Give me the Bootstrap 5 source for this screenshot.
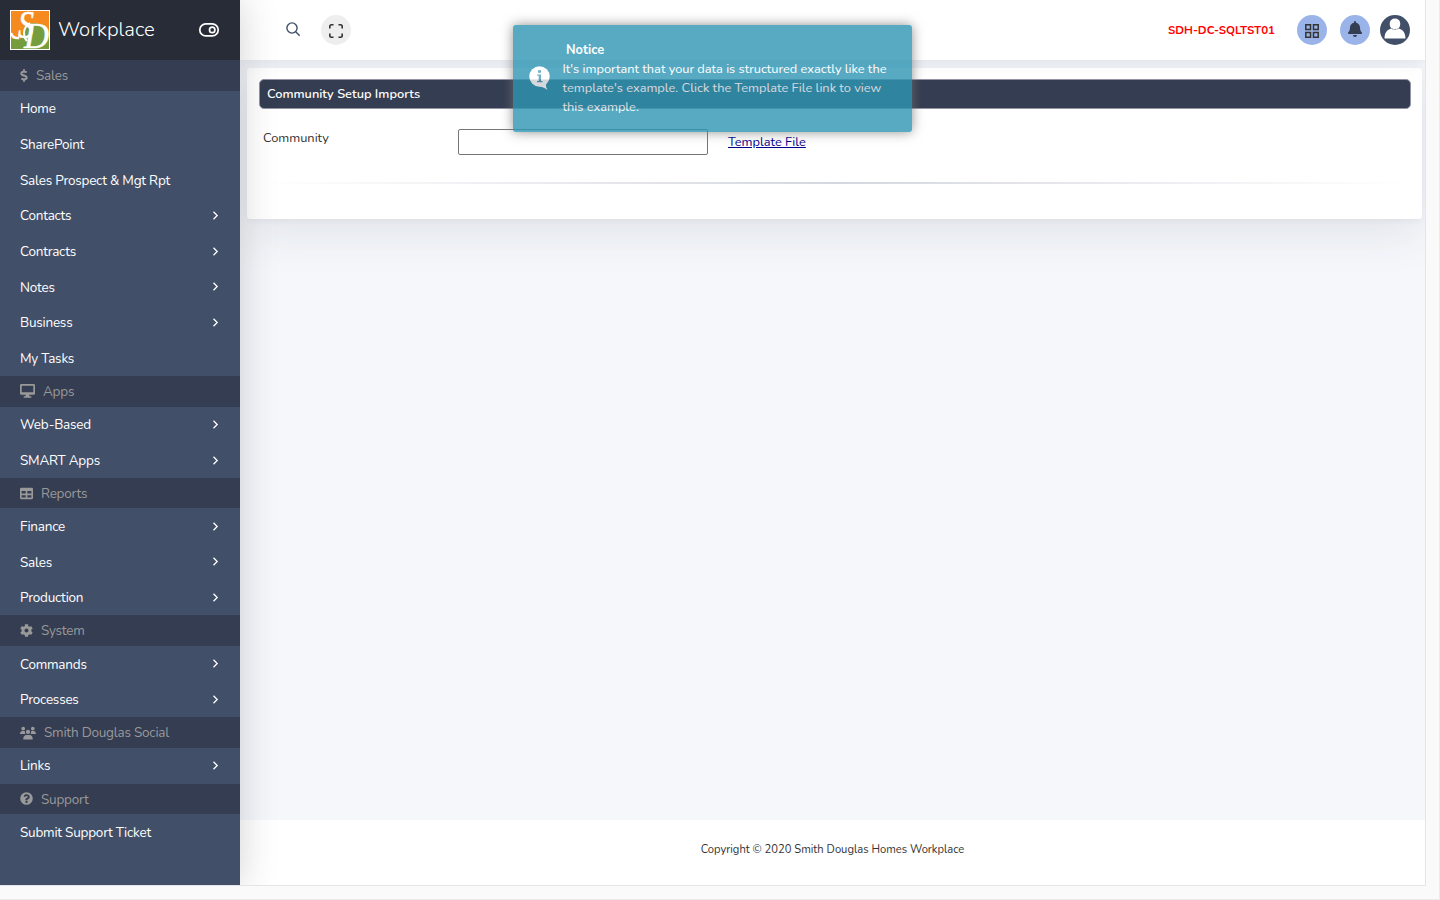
<!DOCTYPE html>
<html lang="en">
<head>
<meta charset="utf-8">
<meta name="viewport" content="width=device-width, initial-scale=1">
<title>Workplace</title>
<link href="https://cdn.jsdelivr.net/npm/bootstrap@5.3.0/dist/css/bootstrap.min.css" rel="stylesheet">
<style>
body{font-family:Nunito,Lato,"Open Sans",sans-serif;font-size:12.8px;line-height:19px;color:#333;background:#fafafa;height:900px;overflow:hidden;border-right:1px solid #ebebeb;border-bottom:1px solid #ebebeb}
.shell{width:1426px;height:886px;border-right:1px solid #e5e5e5;border-bottom:1px solid #e5e5e5;overflow:hidden}
.side{width:240px;background:#424f68;box-shadow:0 0 35px rgba(50,50,60,.22);z-index:3}
.brand-bar{height:60px;background:#272c36;padding:0 20px 0 10px}
.brand-name{font-size:20.3px;font-weight:300;margin:-2px 0 0 8px;color:#fff}
.sec{height:30.5px;padding-left:20px;background:#343d51;color:#999;font-size:13.5px;letter-spacing:-.22px;gap:8px}
.sec span{padding-top:.6px}
.sec svg{fill:#999;flex:none}
.item{height:35.7px;padding:0 20px;color:#fff;text-decoration:none;font-size:13.5px;letter-spacing:-.22px}
.item span{padding-top:.6px}
.item svg{margin-right:1px}
.item svg,.brand-bar .toggle{flex:none}
.topbar{height:60px;background:#fff;padding:0 15px 0 46px;box-shadow:0 0 15px rgba(60,70,90,.13);position:relative}
.circle{width:30px;height:30px;border-radius:50%}
.server{color:#f00;font-weight:700;font-size:11.5px;margin-right:22px}
.content-area{background:#f5f7fb;height:760px;padding:8px 3px 0 7px;overflow:hidden}
.panel{height:151px;background:#fff;border-radius:3px;padding:11px 11px 0 12px;box-shadow:0 14px 45px rgba(50,55,70,.1),0 2px 5px rgba(50,55,70,.05)}
.panel-title{height:30px;background:#343d51;border:1px solid #9294a3;border-radius:5px;color:#fff;font-weight:600;padding-left:7px}
.form-line{padding:20px 0 0 4px}
.form-line label{width:195px;line-height:19px}
.form-line input{width:250px;height:26px;border:1px solid #767676;border-radius:2px;background:#fff}
.form-line a{color:#00008b;margin:4px 0 0 20px}
.fade-rule{height:2px;margin:27px 5px 0;background:linear-gradient(90deg,transparent,#d4d7df 50%,transparent)}
.foot{height:65px;background:#fff;font-size:11.2px;padding-top:19.5px}
.notice{left:513px;top:25px;width:399px;height:107px;z-index:5;background:#2f96b4;color:#fff;opacity:.8;border-radius:3px;box-shadow:0 0 12px #777;padding:15px 15px 15px 16px}
.notice p{width:330px}
</style>
</head>
<body>
<div class="shell d-flex">
  <aside class="side position-relative flex-shrink-0">
    <div class="brand-bar d-flex align-items-center">
      <svg width="40" height="40" viewBox="0 0 40 40" overflow="visible"><path fill="#fff" d="M0 0h40v40H0z"/><path fill="#f58a1f" d="M1 1h38v28H1z"/><path fill="#769d3b" d="M1 29h10L15 16q3-3 9-3 14 1 15 14v12H1z"/><g fill="#fff" stroke="#fff" stroke-width=".5" font-family="Liberation Serif,serif" font-style="italic"><text x="8" y="28" font-size="39" textLength="16" lengthAdjust="spacingAndGlyphs">S</text><text x="14" y="38" font-size="36" textLength="25" lengthAdjust="spacingAndGlyphs">D</text></g><path d="M1 23q2 6 8 5" fill="none" stroke="#fff" stroke-width="2.4"/><path d="M20 13q-6 4-6 10 0 5 3 8" fill="none" stroke="#fff" stroke-width="2"/></svg>
      <span class="brand-name">Workplace</span>
      <svg class="toggle ms-auto" width="22" height="16" viewBox="0 0 22 16" fill="none" stroke="#fff" stroke-width="1.7"><rect x="1.8" y="1.9" width="18.400" height="12" rx="6"/><circle cx="14.2" cy="7.9" r="2.7"/></svg>
    </div>
    <nav id="menu"></nav>
  </aside>
  <div class="flex-grow-1">
    <header class="topbar d-flex align-items-center">
      <svg width="15" height="15" viewBox="0 0 15 15" fill="none" stroke="#424f68" stroke-width="1.4" style="margin-bottom:2px"><circle cx="6" cy="6" r="5.1"/><path d="M9.700 9.700l4 4"/></svg>
      <div class="circle d-flex align-items-center justify-content-center" style="background:#eee;margin-left:20px"><svg width="14" height="14" viewBox="0 0 14 14" fill="none" stroke="#333" stroke-width="1.600" style="margin-top:2px"><path d="M.8 4.500V2.500Q.8.8 2.500.8h2M9.500.8h2q1.700 0 1.700 1.700v2M13.200 9.500v2q0 1.700-1.700 1.700h-2M4.500 13.200h-2Q.8 13.200.8 11.500v-2"/></svg></div>
      <span class="server ms-auto">SDH-DC-SQLTST01</span>
      <div class="circle d-flex align-items-center justify-content-center" style="background:#9ab3e8"><svg width="14" height="14" viewBox="0 0 14 14" fill="none" stroke="#333" stroke-width="1.5" style="margin-top:2px"><path d="M.8.8h4.700v4.700H.8zM8.500.8h4.700v4.700H8.500zM.8 8.500h4.700v4.700H.8zM8.500 8.500h4.700v4.700H8.500z"/></svg></div>
      <div class="circle d-flex align-items-center justify-content-center" style="background:#9ab3e8;margin:0 10px 0 13px"><svg width="14" height="16" viewBox="0 0 448 512" fill="#343d51" style="margin-bottom:2px"><path d="M224 512c35 0 64-29 64-64H160c0 35 29 64 64 64zm215-150c-19-21-55-52-55-154 0-78-54-140-128-155V32a32 32 0 1 0-64 0v21C118 68 64 130 64 208c0 102-36 133-55 154-6 6-9 14-9 22 0 16 13 32 32 32h384c19 0 32-16 32-32 0-8-3-16-9-22z"/></svg></div>
      <svg width="30" height="30" viewBox="0 0 30 30"><circle cx="15" cy="15" r="15" fill="#424f68"/><path fill="#fff" d="M4.500 23.500c.2-6 2.500-9 7-10-3-3-2.500-10 3.500-10s6.500 7 3.500 10c4.500 1 6.800 4 7 10z"/><path d="M11.500 13.500q3.500 2 7 0" fill="none" stroke="#424f68" stroke-width=".7" stroke-dasharray="2 1"/></svg>
    </header>
    <main class="content-area">
      <section class="panel">
        <div class="panel-title d-flex align-items-center">Community Setup Imports</div>
        <div class="form-line d-flex align-items-start"><label for="community">Community</label><input id="community" type="text"><a href="#">Template File</a></div>
        <div class="fade-rule"></div>
      </section>
    </main>
    <footer class="foot text-center">Copyright © 2020 Smith Douglas Homes Workplace</footer>
  </div>
</div>
<div class="notice position-absolute d-flex">
  <svg width="21" height="26" viewBox="0 0 21 26" style="margin-top:25px" class="flex-shrink-0"><circle cx="10.500" cy="11.500" r="10.200" fill="#fff"/><path fill="#fff" d="M10 21.500q4 0 8.500 3.500-2-3-1.500-6z"/><path fill="#4f9db8" d="M9 5.300h3v2.500H9zM8.200 9.500H12v6.500h1.500v1.300H8V16h1.700v-5.200H8.200z"/></svg>
  <div style="margin:1px 0 0 12.500px"><strong style="margin-left:3.500px">Notice</strong><p class="m-0">It's important that your data is structured exactly like the template's example. Click the Template File link to view this example.</p></div>
</div>
<script>
const icons={
 dollar:[8,13,'0 0 288 512','M209 233l-108-32c-12-4-21-15-21-28 0-16 13-29 29-29h66c12 0 24 4 34 11 6 4 14 3 20-2l35-34c7-7 6-19-2-25-24-19-54-30-86-30V16c0-9-7-16-16-16h-32c-9 0-16 7-16 16v48h-3C46 64-6 119 1 184c4 46 39 84 84 97l102 30c12 4 21 15 21 28 0 16-13 29-29 29h-66c-12 0-24-4-34-11-6-4-14-3-20 2l-35 34c-7 7-6 19 2 25 24 19 54 30 86 30v48c0 9 7 16 16 16h32c9 0 16-7 16-16v-48c47-1 90-29 106-73 22-61-15-125-73-142z'],
 desktop:[15,14,'0 0 15 14','M1.300 0h12.400q1.300 0 1.300 1.300v8.200q0 1.300-1.300 1.300H9.200l.3 1.500h1.800v1.400H3.700v-1.400h1.800l.3-1.500H1.300Q0 10.800 0 9.500V1.300Q0 0 1.300 0zM1.700 1.700v6.500h11.600V1.700z'],
 table:[13,13,'0 0 512 512','M464 32H48C22 32 0 54 0 80v352c0 27 22 48 48 48h416c27 0 48-21 48-48V80c0-26-21-48-48-48zM224 416H64v-96h160zm0-160H64v-96h160zm224 160H288v-96h160zm0-160H288v-96h160z'],
 cog:[13,13,'0 0 512 512','M487 316l-42-25c4-23 4-47 0-70l42-25c5-3 8-9 6-14-11-36-30-68-55-95-4-4-10-5-15-2l-43 24c-18-15-38-27-60-35V25c0-6-4-11-10-12-37-8-74-8-109 0-6 1-10 6-10 12v49c-22 8-43 20-61 35L88 85c-5-3-11-2-15 2-25 27-44 59-55 95-2 5 0 11 5 14l43 25c-4 23-4 47 0 70l-43 25c-5 3-7 9-5 14 11 36 30 68 55 95 4 4 10 5 15 2l42-24c18 15 39 27 61 35v49c0 6 4 11 10 12 37 8 74 8 109 0 6-1 10-6 10-12v-49c22-8 42-20 60-35l43 24c5 3 11 2 15-2 25-27 44-59 55-95 2-5-1-11-6-14zM256 336a80 80 0 1 1 0-160 80 80 0 0 1 0 160z'],
 users:[16,14,'0 0 16 14','M1.300 2.600a1.900 1.900 0 1 0 3.800 0 1.900 1.900 0 0 0-3.800 0zM10.900 2.600a1.900 1.900 0 1 0 3.800 0 1.900 1.900 0 0 0-3.800 0zM0 7.900C0 6 1 5 2.400 5h1.800l.8.300a3.300 3.300 0 0 0 .4 2.600zM16 7.900C16 6 15 5 13.600 5h-1.800l-.8.300a3.300 3.300 0 0 1-.4 2.600zM5.900 5.900a2.100 2.100 0 1 0 4.200 0 2.100 2.100 0 0 0-4.200 0zM3.200 13.500c0-3 1.300-4.500 3.200-4.500h3.200c1.900 0 3.200 1.500 3.200 4.500z'],
 help:[13,13,'0 0 512 512','M504 256a248 248 0 1 1-496 0 248 248 0 0 1 496 0zM262 90c-54 0-89 23-116 64-4 5-3 12 3 16l34 26c5 4 13 3 17-2 18-23 30-36 58-36 20 0 46 14 46 34 0 16-13 24-34 35-24 14-56 31-56 73v4c0 7 5 12 12 12h58c7 0 12-5 12-12v-1c0-30 87-31 87-111 0-60-62-102-121-102zm-6 248a46 46 0 1 0 0 92 46 46 0 0 0 0-92z']
};
// a trailing ">" marks an entry that opens a submenu
const sections=[
 ['Sales','dollar',['Home','SharePoint','Sales Prospect & Mgt Rpt','Contacts>','Contracts>','Notes>','Business>','My Tasks']],
 ['Apps','desktop',['Web-Based>','SMART Apps>']],
 ['Reports','table',['Finance>','Sales>','Production>']],
 ['System','cog',['Commands>','Processes>']],
 ['Smith Douglas Social','users',['Links>']],
 ['Support','help',['Submit Support Ticket']]];
document.getElementById('menu').innerHTML=sections.map(([t,i,list])=>{
 const [w,h,v,d]=icons[i];
 return `<div class="sec d-flex align-items-center"><svg width="${w}" height="${h}" viewBox="${v}"><path fill-rule="evenodd" d="${d}"/></svg><span>${t}</span></div>`+
 list.map(x=>`<a class="item d-flex align-items-center justify-content-between" href="#"><span>${x.replace('>','').replace('&','&amp;')}</span>${x.endsWith('>')?'<svg width="7" height="9" viewBox="0 0 7 9" fill="none" stroke="#fff" stroke-width="1.300"><path d="M1.500.8l3.700 3.700L1.500 8.200"/></svg>':''}</a>`).join('');
}).join('');
</script>
<script src="https://cdn.jsdelivr.net/npm/bootstrap@5.3.0/dist/js/bootstrap.bundle.min.js"></script>
</body>
</html>
